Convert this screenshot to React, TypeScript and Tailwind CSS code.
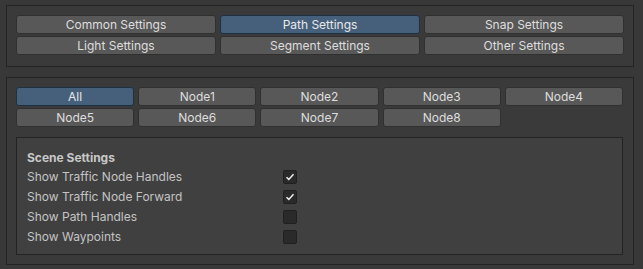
import React from "react";

const topButtons = [
  { label: "Common Settings", active: false },
  { label: "Path Settings", active: true },
  { label: "Snap Settings", active: false },
  { label: "Light Settings", active: false },
  { label: "Segment Settings", active: false },
  { label: "Other Settings", active: false },
];

const nodes = ["All", "Node1", "Node2", "Node3", "Node4", "Node5", "Node6", "Node7", "Node8"];

const toggles = [
  { label: "Show Traffic Node Handles", on: true },
  { label: "Show Traffic Node Forward", on: true },
  { label: "Show Path Handles", on: false },
  { label: "Show Waypoints", on: false },
];

function Btn({ label, active }: { label: string; active: boolean }) {
  return (
    <div
      className={
        "h-[19px] rounded-[3px] border flex items-center justify-center text-[12px] leading-none " +
        (active
          ? "bg-[#46607c] border-[#1f2f44] text-[#e8e8e8]"
          : "bg-[#585858] border-[#303030] text-[#dedede]")
      }
    >
      {label}
    </div>
  );
}

function Check({ on }: { on: boolean }) {
  return (
    <div className="w-[14px] h-[14px] rounded-[2px] border border-[#202020] bg-[#2a2a2a] flex items-center justify-center">
      {on && (
        <svg width="10" height="10" viewBox="0 0 10 10">
          <path d="M1.5 5.2 L3.8 7.4 L8.5 2.3" fill="none" stroke="#eeeeee" strokeWidth="1.5" />
        </svg>
      )}
    </div>
  );
}

export default function App() {
  return (
    <div
      className="w-[643px] h-[269px] bg-[#383838] pt-[5px] pl-[6px] overflow-hidden"
      style={{ fontFamily: "Inter, 'Liberation Sans', sans-serif" }}
    >
      <div className="w-[628px] border border-[#232323] bg-[#3a3a3a] pt-[9px] pb-[11px] pl-[9px] pr-[9px]">
        <div className="grid grid-cols-3 gap-x-[4px] gap-y-[2px]">
          {topButtons.map((b) => (
            <Btn key={b.label} label={b.label} active={b.active} />
          ))}
        </div>
      </div>
      <div className="mt-[10px] w-[628px] h-[188px] border border-[#232323] bg-[#3a3a3a] pt-[9px] pl-[9px] pr-[10px]">
        <div className="grid grid-cols-5 gap-x-[4px] gap-y-[2px]">
          {nodes.map((n, i) => (
            <Btn key={n} label={n} active={i === 0} />
          ))}
        </div>
        <div className="mt-[10px] h-[118px] border border-[#232323] bg-[#404040] pl-[10px] pt-[11px]">
          <div className="text-[12px] font-bold text-[#c8c8c8] leading-[18px]">Scene Settings</div>
          <div className="flex flex-col gap-[2px] mt-[1px]">
            {toggles.map((t) => (
              <div key={t.label} className="flex items-center h-[18px]">
                <div className="w-[256px] text-[12px] text-[#c4c4c4] leading-none">{t.label}</div>
                <Check on={t.on} />
              </div>
            ))}
          </div>
        </div>
      </div>
    </div>
  );
}
